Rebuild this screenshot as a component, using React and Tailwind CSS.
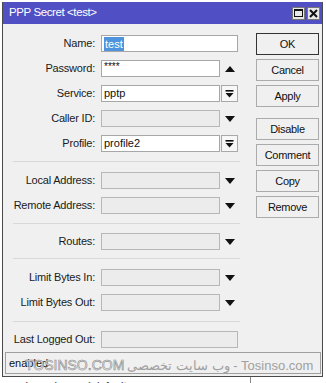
import React from 'react';

const font = "font-['Liberation_Sans',Arial,sans-serif]";

const Arrow = ({ up }) => (
  <svg width="10" height="6" viewBox="0 0 10 6">
    <path d={up ? 'M0 6 L5 0 L10 6Z' : 'M0 0 L10 0 L5 6Z'} fill="#111" />
  </svg>
);

const DropButton = () => (
  <div className="ml-[1px] w-[17px] h-[17px] border border-[#a9a9a9] bg-[#f7f7f7] flex items-center justify-center">
    <svg width="9" height="9" viewBox="0 0 9 9">
      <rect x="0.5" y="1" width="8" height="1.6" fill="#111" />
      <path d="M0.5 4 L8.5 4 L4.5 8.5Z" fill="#111" />
    </svg>
  </div>
);

const Row = ({ label, value, kind = 'plain', disabled, selected, mt = 'mt-[8px]' }) => {
  const box = disabled ? 'bg-[#ececec] border-[#b7b7b7]' : 'bg-white border-[#a7a7a7]';
  return (
    <div className={`flex items-center h-[17px] ${mt}`}>
      <div className="w-[93px] text-right text-[11px] tracking-[-0.2px] text-[#1a1a1a] pr-[1px]">{label}</div>
      <div
        className={`ml-[5px] h-[17px] border ${box} flex items-center px-[2px] text-[11px] text-[#111] ${
          kind === 'plain' ? 'w-[137px]' : 'w-[119px]'
        }`}
      >
        {selected ? <span className="bg-[#4d94dc] text-white px-[1px] leading-[14px]">{value}</span> : value}
      </div>
      {kind === 'drop' && <DropButton />}
      {kind === 'up' && (
        <div className="w-[18px] flex justify-center ml-[1px]">
          <Arrow up />
        </div>
      )}
      {kind === 'down' && (
        <div className="w-[18px] flex justify-center ml-[1px]">
          <Arrow />
        </div>
      )}
    </div>
  );
};

const Sep = ({ mt }) => <div className={`ml-[10px] w-[227px] h-px bg-[#d9d9d9] ${mt}`} />;

const Btn = ({ children, primary, mt = 'mt-[4px]' }) => (
  <div
    className={`w-[63px] h-[22px] flex items-center justify-center text-[11px] tracking-[-0.3px] text-[#111] bg-[#f0f0f0] border ${
      primary ? 'border-[#333]' : 'border-[#ababab]'
    } ${mt}`}
  >
    {children}
  </div>
);

export default function App() {
  return (
    <div className={`w-[326px] h-[383px] bg-white overflow-hidden relative ${font}`}>
      <div className="ml-[2px] mt-[2px] w-[321px] h-[375px] bg-[#f0f0f0] border-l border-r border-b border-[#4a4a4a] flex flex-col">
        {/* title bar */}
        <div className="h-[22px] bg-[#5050c4] flex items-center justify-between pl-[6px] pr-[2px]">
          <span className="text-white text-[11.5px] tracking-[-0.4px]">PPP Secret &lt;test&gt;</span>
          <div className="flex gap-[2px]">
            <div className="w-[13px] h-[13px] bg-[#e8e8e8] border border-[#777] flex items-center justify-center">
              <div className="w-[9px] h-[8px] border border-[#111] border-t-2" />
            </div>
            <div className="w-[13px] h-[13px] bg-[#e8e8e8] border border-[#777] flex items-center justify-center">
              <svg width="9" height="9" viewBox="0 0 9 9">
                <path d="M1 1 L8 8 M8 1 L1 8" stroke="#111" strokeWidth="2" />
              </svg>
            </div>
          </div>
        </div>

        <div className="flex">
          <div className="w-[237px] pt-[11px]">
            <Row label="Name:" value="test" selected mt="mt-0" />
            <Row label="Password:" value={<span className="text-[10px] -mt-[4px]">****</span>} kind="up" />
            <Row label="Service:" value="pptp" kind="drop" />
            <Row label="Caller ID:" value="" kind="down" disabled />
            <Row label="Profile:" value="profile2" kind="drop" />
            <Sep mt="mt-[9px]" />
            <Row label="Local Address:" value="" kind="down" disabled mt="mt-[10px]" />
            <Row label="Remote Address:" value="" kind="down" disabled />
            <Sep mt="mt-[9px]" />
            <Row label="Routes:" value="" kind="down" disabled mt="mt-[9px]" />
            <Sep mt="mt-[8px]" />
            <Row label="Limit Bytes In:" value="" kind="down" disabled mt="mt-[10px]" />
            <Row label="Limit Bytes Out:" value="" kind="down" disabled />
            <Sep mt="mt-[10px]" />
            <Row label="Last Logged Out:" value="" disabled mt="mt-[9px]" />
          </div>
          <div className="ml-[16px] pt-[9px] flex flex-col">
            <Btn primary mt="mt-0">OK</Btn>
            <Btn>Cancel</Btn>
            <Btn>Apply</Btn>
            <Btn mt="mt-[11px]">Disable</Btn>
            <Btn>Comment</Btn>
            <Btn>Copy</Btn>
            <Btn>Remove</Btn>
          </div>
        </div>

        {/* status bar */}
        <div className="relative mt-[4px] ml-[2px] w-[316px] h-[22px] border border-[#a0a0a0] bg-[#f0f0f0] flex items-center pl-[3px] text-[11px] text-[#111]">
          enabled
          <div className="absolute left-[19px] top-[2px] flex items-center gap-[3px] whitespace-nowrap">
            <span className="text-[14px] text-[#f4f4f4] [-webkit-text-stroke:0.6px_#8a8a8a]">TOSINSO.COM</span>
            <span className="text-[13px] text-[#a0a0a0]">وب سایت تخصصی - Tosinso.com</span>
          </div>
        </div>
      </div>

      {/* window behind, partly visible */}
      <div className="absolute left-[24px] top-[378px] flex gap-[10px] text-[11px] text-[#333] whitespace-nowrap">
        <span>( no</span>
        <span>( yes</span>
        <span>( default</span>
      </div>
      <div className="absolute left-[250px] top-[377px] w-px h-[6px] bg-[#888]" />
    </div>
  );
}
